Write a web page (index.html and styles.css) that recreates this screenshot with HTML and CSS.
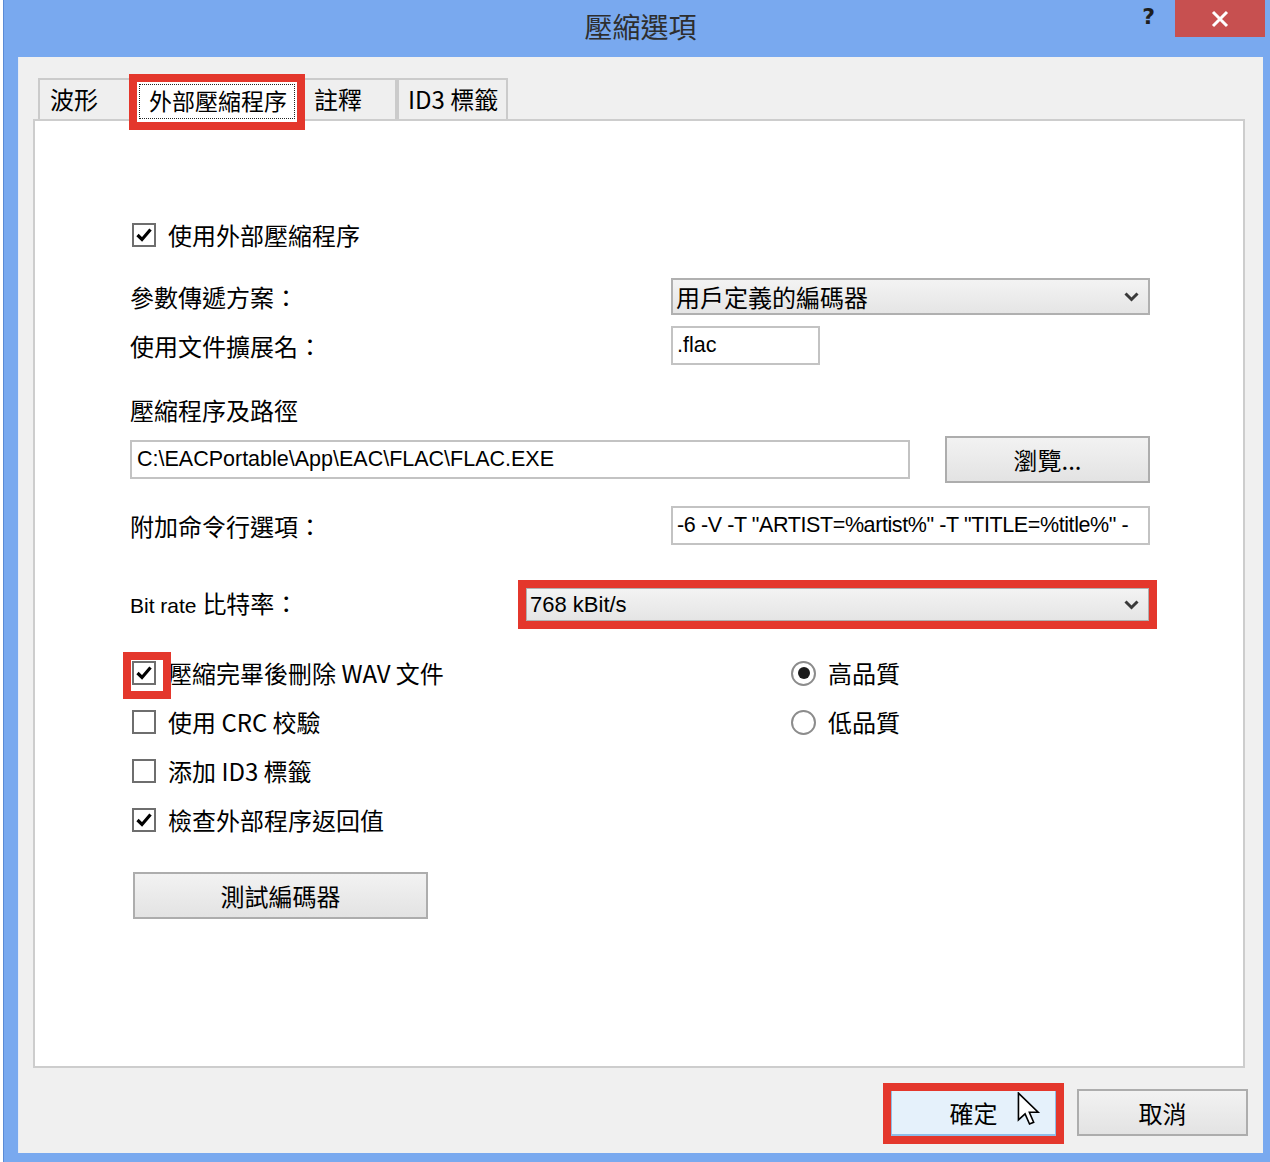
FILE: index.html
```html
<!DOCTYPE html>
<html lang="zh-Hant">
<head>
<meta charset="utf-8">
<title>壓縮選項</title>
<link rel="stylesheet" href="styles.css">
</head>
<body>
<div class="window">
  <div class="titlebar">
    <div></div>
    <div class="title">壓縮選項</div>
    <div class="controls">
      <div class="help">?</div>
      <div class="close">
        <svg width="18" height="18" viewBox="0 0 18 18"><path d="M2 2 L16 16 M16 2 L2 16" stroke="#fff" stroke-width="3" fill="none"/></svg>
      </div>
    </div>
  </div>
  <div class="client">
    <div class="tabs">
      <div class="tab t1">波形</div>
      <div class="tab active hl-tab"><span class="focus">外部壓縮程序</span></div>
      <div class="tab t3">註釋</div>
      <div class="tab t4">ID3 標籤</div>
    </div>
    <div class="pane">
      <div class="row row-a">
        <span class="check checked"><svg width="20" height="20" viewBox="0 0 20 20"><path d="M3.5 10 L8 14.5 L16.5 4.5" stroke="#000" stroke-width="3.2" fill="none"/></svg></span>
        <span class="ctext">使用外部壓縮程序</span>
      </div>
      <div class="row grid row-b">
        <span class="label">參數傳遞方案：</span>
        <div class="select w479"><span>用戶定義的編碼器</span><svg width="15" height="10" viewBox="0 0 15 10"><polyline points="1.5,1.5 7.5,7.5 13.5,1.5" stroke="#3a3a3a" stroke-width="3" fill="none"/></svg></div>
      </div>
      <div class="row grid row-c">
        <span class="label">使用文件擴展名：</span>
        <div class="input w149">.flac</div>
      </div>
      <div class="row row-d">
        <span class="label">壓縮程序及路徑</span>
      </div>
      <div class="row row-e">
        <div class="input path">C:\EACPortable\App\EAC\FLAC\FLAC.EXE</div>
        <div class="btn browse">瀏覽...</div>
      </div>
      <div class="row grid row-f">
        <span class="label">附加命令行選項：</span>
        <div class="input w479 clip">-6 -V -T "ARTIST=%artist%" -T "TITLE=%title%" -</div>
      </div>
      <div class="row row-g">
        <span class="label bitlabel"><span class="lat">Bit rate </span>比特率：</span>
        <div class="select bitrate hl-sel"><span class="lat2">768 kBit/s</span><svg width="15" height="10" viewBox="0 0 15 10"><polyline points="1.5,1.5 7.5,7.5 13.5,1.5" stroke="#3a3a3a" stroke-width="3" fill="none"/></svg></div>
      </div>
      <div class="lower">
        <div class="col-checks">
          <div class="crow">
            <span class="check checked hl-check"><svg width="20" height="20" viewBox="0 0 20 20"><path d="M3.5 10 L8 14.5 L16.5 4.5" stroke="#000" stroke-width="3.2" fill="none"/></svg></span>
            <span class="ctext">壓縮完畢後刪除 WAV 文件</span>
          </div>
          <div class="crow">
            <span class="check"></span>
            <span class="ctext">使用 CRC 校驗</span>
          </div>
          <div class="crow">
            <span class="check"></span>
            <span class="ctext">添加 ID3 標籤</span>
          </div>
          <div class="crow">
            <span class="check checked"><svg width="20" height="20" viewBox="0 0 20 20"><path d="M3.5 10 L8 14.5 L16.5 4.5" stroke="#000" stroke-width="3.2" fill="none"/></svg></span>
            <span class="ctext">檢查外部程序返回值</span>
          </div>
          <div class="btn test">測試編碼器</div>
        </div>
        <div class="col-radios">
          <div class="crow">
            <span class="radio on"></span>
            <span class="ctext">高品質</span>
          </div>
          <div class="crow">
            <span class="radio"></span>
            <span class="ctext">低品質</span>
          </div>
        </div>
      </div>
    </div>
    <div class="footer">
      <div class="btn ok hl-ok">確定
        <svg class="cursor" width="24" height="34" viewBox="0 0 13 19"><path d="M0.6 0.6 L0.6 15.6 L4.3 12.2 L6.8 17.9 L9.1 16.9 L6.7 11.3 L11.6 11.3 Z" fill="#fff" stroke="#000" stroke-width="0.9" stroke-linejoin="miter"/></svg>
      </div>
      <div class="btn cancel">取消</div>
    </div>
  </div>
</div>
</body>
</html>
```
FILE: styles.css
```css
* { box-sizing: border-box; }
body {
  margin: 0;
  background: #ffffff;
  font-family: "Noto Sans CJK TC", "Liberation Sans", sans-serif;
  color: #000;
}
.window {
  margin-left: 3px;
  width: 1267px;
  height: 1162px;
  background: #79a9ef;
  border-left: 1px solid #5b8bd5;
  padding: 0 7px 9px 14px;
  display: flex;
  flex-direction: column;
}
.titlebar {
  height: 57px;
  display: grid;
  grid-template-columns: 1fr auto 1fr;
}
.title {
  font-size: 28px;
  line-height: 28px;
  color: #2e2e2e;
  padding-top: 12px;
}
.controls {
  justify-self: end;
  display: flex;
  align-items: flex-start;
  margin-right: -2px;
}
.help {
  font-family: "DejaVu Sans", sans-serif;
  font-weight: bold;
  font-size: 22px;
  line-height: 22px;
  color: #1e1e1e;
  margin-top: 6px;
  margin-right: 20px;
}
.close {
  width: 90px;
  height: 37px;
  background: #c75050;
  display: flex;
  align-items: center;
  justify-content: center;
}
.client {
  width: 1245px;
  height: 1096px;
  background: #f0f0f0;
  border-left: 1px solid #e4ebf6;
  padding: 15px 0 0 14px;
}
.tabs {
  height: 47px;
  display: flex;
  align-items: flex-end;
  padding-left: 5px;
  position: relative;
  z-index: 2;
}
.tab {
  height: 41px;
  background: #efefef;
  border: 2px solid #cbcbcb;
  border-bottom: none;
  font-size: 24px;
  line-height: 38px;
  padding-left: 10px;
  white-space: nowrap;
}
.t1 { width: 92px; border-right: none; }
.t3 { width: 97px; border-left: none; padding-left: 14px; }
.t4 { width: 111px; border-left: 2px solid #cbcbcb; padding-left: 9px; }
.tab.active {
  width: 170px;
  height: 47px;
  margin-bottom: -2px;
  background: #ffffff;
  padding: 8px 3px 4px 7px;
  position: relative;
  border-bottom: none;
}
.focus {
  display: block;
  height: 35px;
  border: 1px dotted #222;
  padding-left: 9px;
  line-height: 31px;
  font-size: 23px;
}
.hl-tab::after,
.hl-sel::after,
.hl-check::after,
.hl-ok::after {
  content: "";
  position: absolute;
  border: 8px solid #e4372c;
  pointer-events: none;
}
.hl-tab::after { top: -2px; left: -3px; right: -7px; bottom: -9px; }
.pane {
  width: 1212px;
  height: 949px;
  background: #ffffff;
  border: 2px solid #cdcdcd;
  padding: 0 93px 0 95px;
  position: relative;
  z-index: 1;
}
.row {
  display: flex;
  align-items: center;
}
.row.grid {
  display: grid;
  grid-template-columns: 541px auto;
  align-items: center;
}
.label, .ctext {
  font-size: 24px;
  line-height: 30px;
  white-space: nowrap;
}
.row-a { height: 24px; margin-top: 102px; padding-left: 2px; }
.row-b { height: 37px; margin-top: 31px; }
.row-c { height: 39px; margin-top: 11px; }
.row-d { height: 30px; margin-top: 30px; }
.row-e { height: 47px; margin-top: 11px; justify-content: space-between; }
.row-f { height: 39px; margin-top: 23px; }
.row-g { height: 35px; margin-top: 42px; justify-content: space-between; }
.ctext { margin-left: 12px; }
.check {
  width: 24px;
  height: 24px;
  border: 2px solid #6e6e6e;
  background: #fff;
  display: inline-flex;
  align-items: center;
  justify-content: center;
  flex: none;
  position: relative;
}
.hl-check::after { top: -11px; left: -11px; right: -17px; bottom: -16px; }
.radio {
  width: 25px;
  height: 25px;
  border: 2px solid #8c8c8c;
  border-radius: 50%;
  background: #fff;
  display: inline-flex;
  align-items: center;
  justify-content: center;
  flex: none;
}
.radio.on::before {
  content: "";
  width: 12px;
  height: 12px;
  border-radius: 50%;
  background: #1c1c1c;
}
.input {
  height: 39px;
  background: #fff;
  border: 2px solid #c3c3c3;
  font-family: "Liberation Sans", "Noto Sans CJK TC", sans-serif;
  font-size: 21.5px;
  line-height: 35px;
  padding-left: 4px;
  white-space: nowrap;
  overflow: hidden;
}
.clip { letter-spacing: -0.4px; }
.w149 { width: 149px; }
.w479 { width: 479px; }
.path { width: 780px; padding-left: 5px; }
.select {
  height: 37px;
  background: linear-gradient(#f3f3f3, #e5e5e5);
  border: 2px solid #b0b0b0;
  display: flex;
  align-items: center;
  justify-content: space-between;
  padding: 0 9px 0 3px;
  font-size: 24px;
  position: relative;
}
.bitrate { width: 625px; height: 35px; }
.hl-sel::after { top: -9px; left: -9px; right: -9px; bottom: -9px; }
.lat {
  font-family: "Liberation Sans", sans-serif;
  font-size: 21px;
}
.lat2 {
  font-family: "Liberation Sans", sans-serif;
  font-size: 22px;
}
.btn {
  height: 47px;
  background: linear-gradient(#f2f2f2, #e3e3e3);
  border: 2px solid #adadad;
  display: flex;
  align-items: center;
  justify-content: center;
  font-size: 24px;
  position: relative;
}
.browse { width: 205px; }
.lower {
  display: flex;
  margin-top: 39px;
}
.col-checks {
  width: 661px;
  padding-left: 2px;
}
.crow {
  height: 24px;
  display: flex;
  align-items: center;
  margin-bottom: 25px;
}
.test {
  width: 295px;
  margin-top: 40px;
  margin-left: 1px;
}
.footer {
  display: flex;
  justify-content: flex-end;
  gap: 20px;
  margin-top: 21px;
  padding-right: 15px;
}
.ok {
  width: 167px;
  background: #e5f1fb;
  border: 2px solid #8fbde8;
}
.hl-ok::after { top: -8px; left: -9px; right: -9px; bottom: -10px; }
.cancel { width: 171px; }
.cursor {
  position: absolute;
  left: 125px;
  top: 1px;
}
```
